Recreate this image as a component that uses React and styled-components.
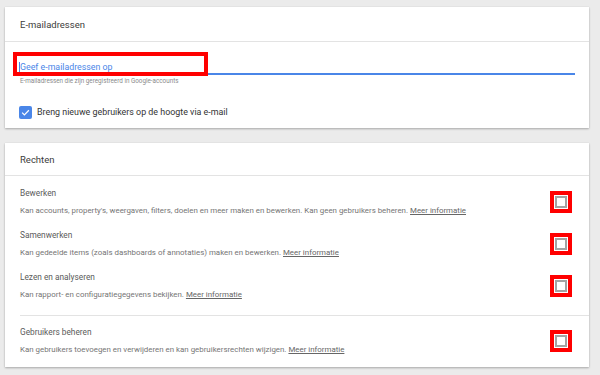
import React from "react";
import styled, { createGlobalStyle } from "styled-components";

const GlobalStyle = createGlobalStyle`
  html, body {
    margin: 0;
    padding: 0;
    background: #ebebeb;
    font-family: Roboto, "Liberation Sans", Arial, sans-serif;
  }
`;

const permissions = [
  {
    title: "Bewerken",
    text: "Kan accounts, property's, weergaven, filters, doelen en meer maken en bewerken. Kan geen gebruikers beheren.",
  },
  {
    title: "Samenwerken",
    text: "Kan gedeelde items (zoals dashboards of annotaties) maken en bewerken.",
  },
  {
    title: "Lezen en analyseren",
    text: "Kan rapport- en configuratiegegevens bekijken.",
  },
  {
    title: "Gebruikers beheren",
    text: "Kan gebruikers toevoegen en verwijderen en kan gebruikersrechten wijzigen.",
    separated: true,
  },
];

function App() {
  return (
    <Page>
      <GlobalStyle />
      <Card>
        <CardHeader height={34}>E-mailadressen</CardHeader>
        <EmailBody>
          <Field>
            <Caret />
            <Placeholder>Geef e-mailadressen op</Placeholder>
            <FieldHighlight />
          </Field>
          <Helper>E-mailadressen die zijn geregistreerd in Google-accounts</Helper>
          <CheckRow>
            <BlueCheck>
              <svg width="9" height="9" viewBox="0 0 24 24">
                <path
                  d="M3 12.5l6 6L21 6"
                  fill="none"
                  stroke="#fff"
                  strokeWidth="3.2"
                />
              </svg>
            </BlueCheck>
            <CheckLabel>Breng nieuwe gebruikers op de hoogte via e-mail</CheckLabel>
          </CheckRow>
        </EmailBody>
      </Card>

      <Card>
        <CardHeader height={32}>Rechten</CardHeader>
        <List>
          {permissions.map((p) => (
            <Row key={p.title} separated={p.separated}>
              <RowText>
                <RowTitle>{p.title}</RowTitle>
                <RowDesc>
                  {p.text} <MoreLink>Meer informatie</MoreLink>
                </RowDesc>
              </RowText>
              <BoxHighlight>
                <EmptyBox />
              </BoxHighlight>
            </Row>
          ))}
        </List>
      </Card>
    </Page>
  );
}

export default App;

const Page = styled.div`
  padding: 7px 11px 8px 5px;
  display: flex;
  flex-direction: column;
  gap: 15px;
`;

const Card = styled.div`
  background: #fff;
  box-shadow: 0 1px 2px rgba(0, 0, 0, 0.28), 0 0 1px rgba(0, 0, 0, 0.08);
`;

const CardHeader = styled.div`
  height: ${(p) => p.height}px;
  display: flex;
  align-items: center;
  padding-left: 15px;
  font-size: 9.5px;
  color: #3c3c3c;
  border-bottom: 1px solid #e3e3e3;
`;

const EmailBody = styled.div`
  padding: 19px 14px 9px 9px;
`;

const Field = styled.div`
  position: relative;
  height: 12px;
  display: flex;
  align-items: center;
  padding-left: 5px;
  border-bottom: 2px solid #4a86e8;
`;

const Caret = styled.span`
  width: 1px;
  height: 10px;
  background: #4a86e8;
`;

const Placeholder = styled.span`
  font-size: 8.8px;
  color: #4a86e8;
`;

const FieldHighlight = styled.div`
  position: absolute;
  left: -1px;
  top: -9px;
  width: 187px;
  height: 16px;
  border: 4px solid #ff0000;
`;

const Helper = styled.div`
  margin-top: 2px;
  padding-left: 6px;
  font-size: 6.3px;
  line-height: 8px;
  color: #8a8a8a;
`;

const CheckRow = styled.div`
  margin-top: 20px;
  padding-left: 5px;
  height: 14px;
  display: flex;
  align-items: center;
  gap: 5px;
`;

const BlueCheck = styled.div`
  width: 13px;
  height: 13px;
  border-radius: 2px;
  background: #4a86e8;
  display: flex;
  align-items: center;
  justify-content: center;
`;

const CheckLabel = styled.span`
  font-size: 8.9px;
  color: #333;
`;

const List = styled.div`
  display: flex;
  flex-direction: column;
`;

const Row = styled.div`
  display: flex;
  align-items: center;
  justify-content: space-between;
  padding: ${(p) => (p.separated ? "10px 17px 11px 0" : "11px 17px 1px 0")};
  margin-left: 15px;
  margin-top: ${(p) => (p.separated ? "13px" : "0")};
  border-top: ${(p) => (p.separated ? "1px solid #e3e3e3" : "none")};
`;

const RowText = styled.div`
  display: flex;
  flex-direction: column;
  gap: 6px;
`;

const RowTitle = styled.div`
  font-size: 8.3px;
  line-height: 12px;
  color: #5a5a5a;
`;

const RowDesc = styled.div`
  font-size: 7.9px;
  line-height: 12px;
  color: #757575;
`;

const MoreLink = styled.span`
  color: #666;
  text-decoration: underline;
`;

const BoxHighlight = styled.div`
  width: 14px;
  height: 14px;
  border: 4px solid #ff0000;
  display: flex;
  align-items: center;
  justify-content: center;
  background: #fff;
`;

const EmptyBox = styled.div`
  width: 8px;
  height: 8px;
  border: 2px solid #a3a3a3;
  background: #fff;
`;
